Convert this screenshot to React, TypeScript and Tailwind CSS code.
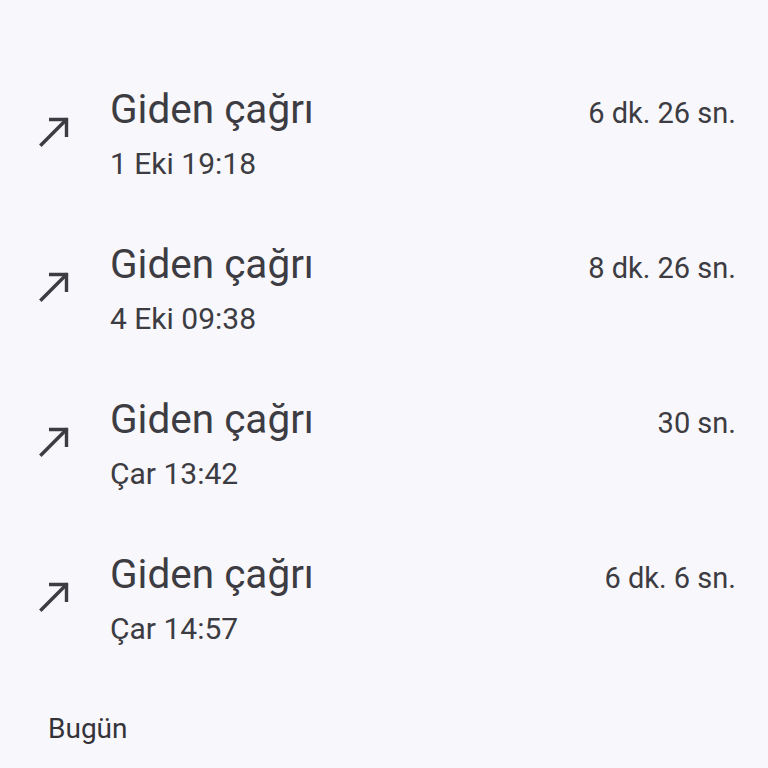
import React from 'react'

interface Call {
  title: string
  when: string
  duration: string
}

const calls: Call[] = [
  { title: 'Giden çağrı', when: '1 Eki 19:18', duration: '6 dk. 26 sn.' },
  { title: 'Giden çağrı', when: '4 Eki 09:38', duration: '8 dk. 26 sn.' },
  { title: 'Giden çağrı', when: 'Çar 13:42', duration: '30 sn.' },
  { title: 'Giden çağrı', when: 'Çar 14:57', duration: '6 dk. 6 sn.' },
]

const OutgoingArrow = () => (
  <svg width="30" height="30" viewBox="0 0 30 30" fill="none" stroke="#3c3c42" strokeWidth="3.4" strokeLinecap="square">
    <path d="M2.5 27.5L27 3" />
    <path d="M10 2.5H27.5V20" strokeLinecap="butt" />
  </svg>
)

export default function App() {
  return (
    <div className="w-[768px] h-[768px] bg-[#f8f7fc] text-[#3c3c42] overflow-hidden pt-[85px] font-['Roboto','Noto_Sans',sans-serif]">
      {calls.map((c, i) => (
        <div key={i} className="flex items-start h-[155px] pr-8">
          <div className="w-[110px] pl-[39px] pt-[32px]">
            <OutgoingArrow />
          </div>
          <div className="flex-1 flex flex-col">
            <span className="text-[40.5px] leading-[48px]">{c.title}</span>
            <span className="text-[30px] leading-[40px] mt-[11px]">{c.when}</span>
          </div>
          <span className="text-[29px] leading-[48px] mt-[4px]">{c.duration}</span>
        </div>
      ))}
      <div className="pl-[48px] mt-[6px] text-[28px] leading-[36px] font-normal text-[#333339]">Bugün</div>
    </div>
  )
}
